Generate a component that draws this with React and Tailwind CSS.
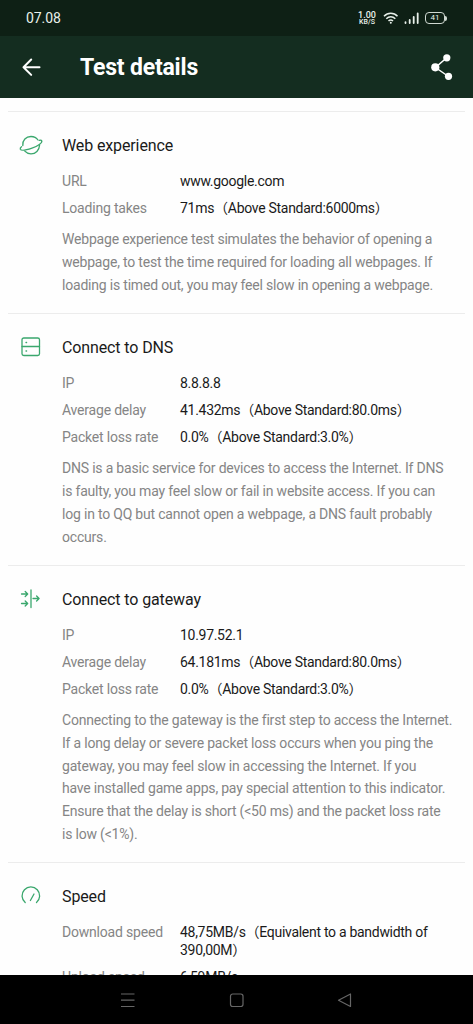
const sections = [
  {
    title: "Web experience",
    icon: "planet",
    rows: [
      ["URL", "www.google.com"],
      ["Loading takes", "71ms（Above Standard:6000ms）"],
    ],
    text: [
      "Webpage experience test simulates the behavior of opening a",
      "webpage, to test the time required for loading all webpages. If",
      "loading is timed out, you may feel slow in opening a webpage.",
    ],
  },
  {
    title: "Connect to DNS",
    icon: "server",
    rows: [
      ["IP", "8.8.8.8"],
      ["Average delay", "41.432ms（Above Standard:80.0ms）"],
      ["Packet loss rate", "0.0%（Above Standard:3.0%）"],
    ],
    text: [
      "DNS is a basic service for devices to access the Internet. If DNS",
      "is faulty, you may feel slow or fail in website access. If you can",
      "log in to QQ but cannot open a webpage, a DNS fault probably",
      "occurs.",
    ],
  },
  {
    title: "Connect to gateway",
    icon: "gateway",
    rows: [
      ["IP", "10.97.52.1"],
      ["Average delay", "64.181ms（Above Standard:80.0ms）"],
      ["Packet loss rate", "0.0%（Above Standard:3.0%）"],
    ],
    text: [
      "Connecting to the gateway is the first step to access the Internet.",
      "If a long delay or severe packet loss occurs when you ping the",
      "gateway, you may feel slow in accessing the Internet. If you",
      "have installed game apps, pay special attention to this indicator.",
      "Ensure that the delay is short (<50 ms) and the packet loss rate",
      "is low (<1%).",
    ],
  },
  {
    title: "Speed",
    icon: "gauge",
    rows: [
      ["Download speed", "48,75MB/s（Equivalent to a bandwidth of 390,00M）"],
      ["Upload speed", "6,59MB/s"],
    ],
    text: [],
  },
]

const icons = {
  planet: (
    <>
      <path d="M3.800 11.500C3.300 6.300 7 2.500 12 2.500c3.200 0 5.500 1.300 7 3.500" />
      <path d="M20.300 6.300c1.400-.2 2.300 0 2.500.7.500 1.900-3.800 5.200-9.800 7.200s-11 2.600-11.700 1c-.3-.8.200-1.700 1.200-2.500" />
      <path d="M20.600 11c-.3 5.400-4 8.800-8.600 8.800-2.600 0-4.700-1-6.200-2.700" />
    </>
  ),
  server: (
    <>
      <rect x="3" y="2" width="17.500" height="17.500" rx="1.800" />
      <path d="M3 10.500h17.500M7 6.500h.6M7 15h.6" />
    </>
  ),
  gateway: (
    <>
      <path d="M12 2v17.500" />
      <path d="M2.500 6h6M6.200 3.500L8.700 6 6.200 8.500M2.500 15.500h6M6.200 13l2.500 2.500L6.200 18M14 10.500h6M17.600 8l2.500 2.500-2.500 2.500" />
    </>
  ),
  gauge: <path d="M6.200 17.500A8.800 8.800 0 1 1 17.500 17.500M11.400 15.500L15 9" />,
}

const StatusBar = () => (
  <div className="flex h-9 shrink-0 items-center bg-[#0e2015] pl-[26px] text-[#e8f0ea]">
    <div className="flex-1 text-[14px] tracking-[-0.1px]">07.08</div>
    <div className="mr-[7px] flex w-[18px] flex-col items-center font-medium">
      <span className="text-[9px] leading-[8px]">1.00</span>
      <span className="text-[7px] leading-[7px]">KB/S</span>
    </div>
    <svg width="16" height="14" viewBox="0 0 16 14" fill="none" stroke="currentColor" strokeWidth="1.500" className="mr-[5px]">
      <path d="M1 5.200c3.800-4 9.800-4 13.500 0M3.300 7.700c2.600-2.600 6.400-2.600 9 0M5.500 10c1.300-1.200 3.200-1.200 4.500 0" />
      <circle cx="7.800" cy="11.800" r="1" fill="currentColor" stroke="none" />
    </svg>
    <svg width="15" height="12" viewBox="0 0 15 12" fill="none" stroke="currentColor" strokeWidth="1.800" strokeLinecap="round" className="mr-[6px]">
      <path d="M1.500 10.200v.8M5.700 8v3M9.700 5v6M13.700 1.500V11" />
    </svg>
    <div className="flex h-[12px] w-[20px] items-center justify-center rounded-[4px] border border-[#cfd8d1] text-[8px] leading-none">41</div>
    <div className="mr-[26px] h-[5px] w-[2px] rounded-r bg-[#cfd8d1]" />
  </div>
)

const Header = () => (
  <div className="flex h-[62px] shrink-0 items-center bg-[#142d20] pl-[21px] text-white">
    <svg width="20" height="20" viewBox="0 0 20 20" fill="none" stroke="currentColor" strokeWidth="2" strokeLinecap="round" strokeLinejoin="round">
      <path d="M18.500 10.200H2.500M10.200 2.500l-7.700 7.700 7.700 7.700" />
    </svg>
    <h1 className="ml-[39px] flex-1 pt-[3px] text-[23px] font-bold tracking-[-0.2px]">Test details</h1>
    <svg width="22" height="26" viewBox="0 0 22 26" fill="currentColor" className="mr-[20px]">
      <path d="M16 3.500L4.500 13.500l13 9" fill="none" stroke="currentColor" strokeWidth="1.500" />
      <circle cx="15.800" cy="3.800" r="3.600" />
      <circle cx="4.300" cy="13.300" r="4.100" />
      <circle cx="17.500" cy="22.300" r="3.600" />
    </svg>
  </div>
)

const Section = ({ title, icon, rows, text }) => (
  <div className="mx-2 border-t border-[#ececec] pt-[22px] pb-[16.300px]">
    <div className="flex h-6 items-center">
      <svg width="24" height="24" viewBox="0 0 24 24" fill="none" stroke="#3aa76d" strokeWidth="1.300" strokeLinecap="round" strokeLinejoin="round" className="ml-[11px]">
        {icons[icon]}
      </svg>
      <h2 className="ml-[19px] text-[16px] tracking-[-0.12px] text-[#1a1a1a]">{title}</h2>
    </div>
    <div className="mt-[14.200px] flex flex-col gap-[9px] pl-[54px] text-[14px] leading-[18px]">
      {rows.map(([label, value]) => (
        <div key={label} className="flex">
          <div className="w-[118px] shrink-0 tracking-[-0.2px] text-[#858585]">{label}</div>
          <div className="w-[260px] tracking-[-0.29px] text-[#1a1a1a]">{value}</div>
        </div>
      ))}
    </div>
    <p className="mt-[11.100px] pl-[54px] text-[14px] leading-[22.800px] tracking-[-0.2px] whitespace-nowrap text-[#858585]">
      {text.map((line) => (
        <span key={line} className="block">{line}</span>
      ))}
    </p>
  </div>
)

const NavBar = () => (
  <div className="flex h-[49px] shrink-0 items-center bg-black pl-[120px] text-[#666]">
    <svg width="232" height="16" viewBox="0 0 232 16" fill="none" stroke="currentColor" strokeWidth="1.200" strokeLinejoin="round">
      <path d="M1 2h13.500M1 8.200h13.500M1 14.500h13.500" />
      <rect x="110.500" y="2" width="12.500" height="12.500" rx="2.200" />
      <path d="M218.500 8.200L230.500 2v12.500z" />
    </svg>
  </div>
)

export default function App() {
  return (
    <div className="flex h-screen w-full flex-col overflow-hidden bg-white font-[Roboto,'Noto_Sans_CJK_SC',sans-serif]">
      <StatusBar />
      <Header />
      <div className="min-h-0 flex-1 overflow-hidden bg-[#fefefe] pt-[13px]">
        {sections.map((s) => (
          <Section key={s.title} {...s} />
        ))}
      </div>
      <NavBar />
    </div>
  )
}
